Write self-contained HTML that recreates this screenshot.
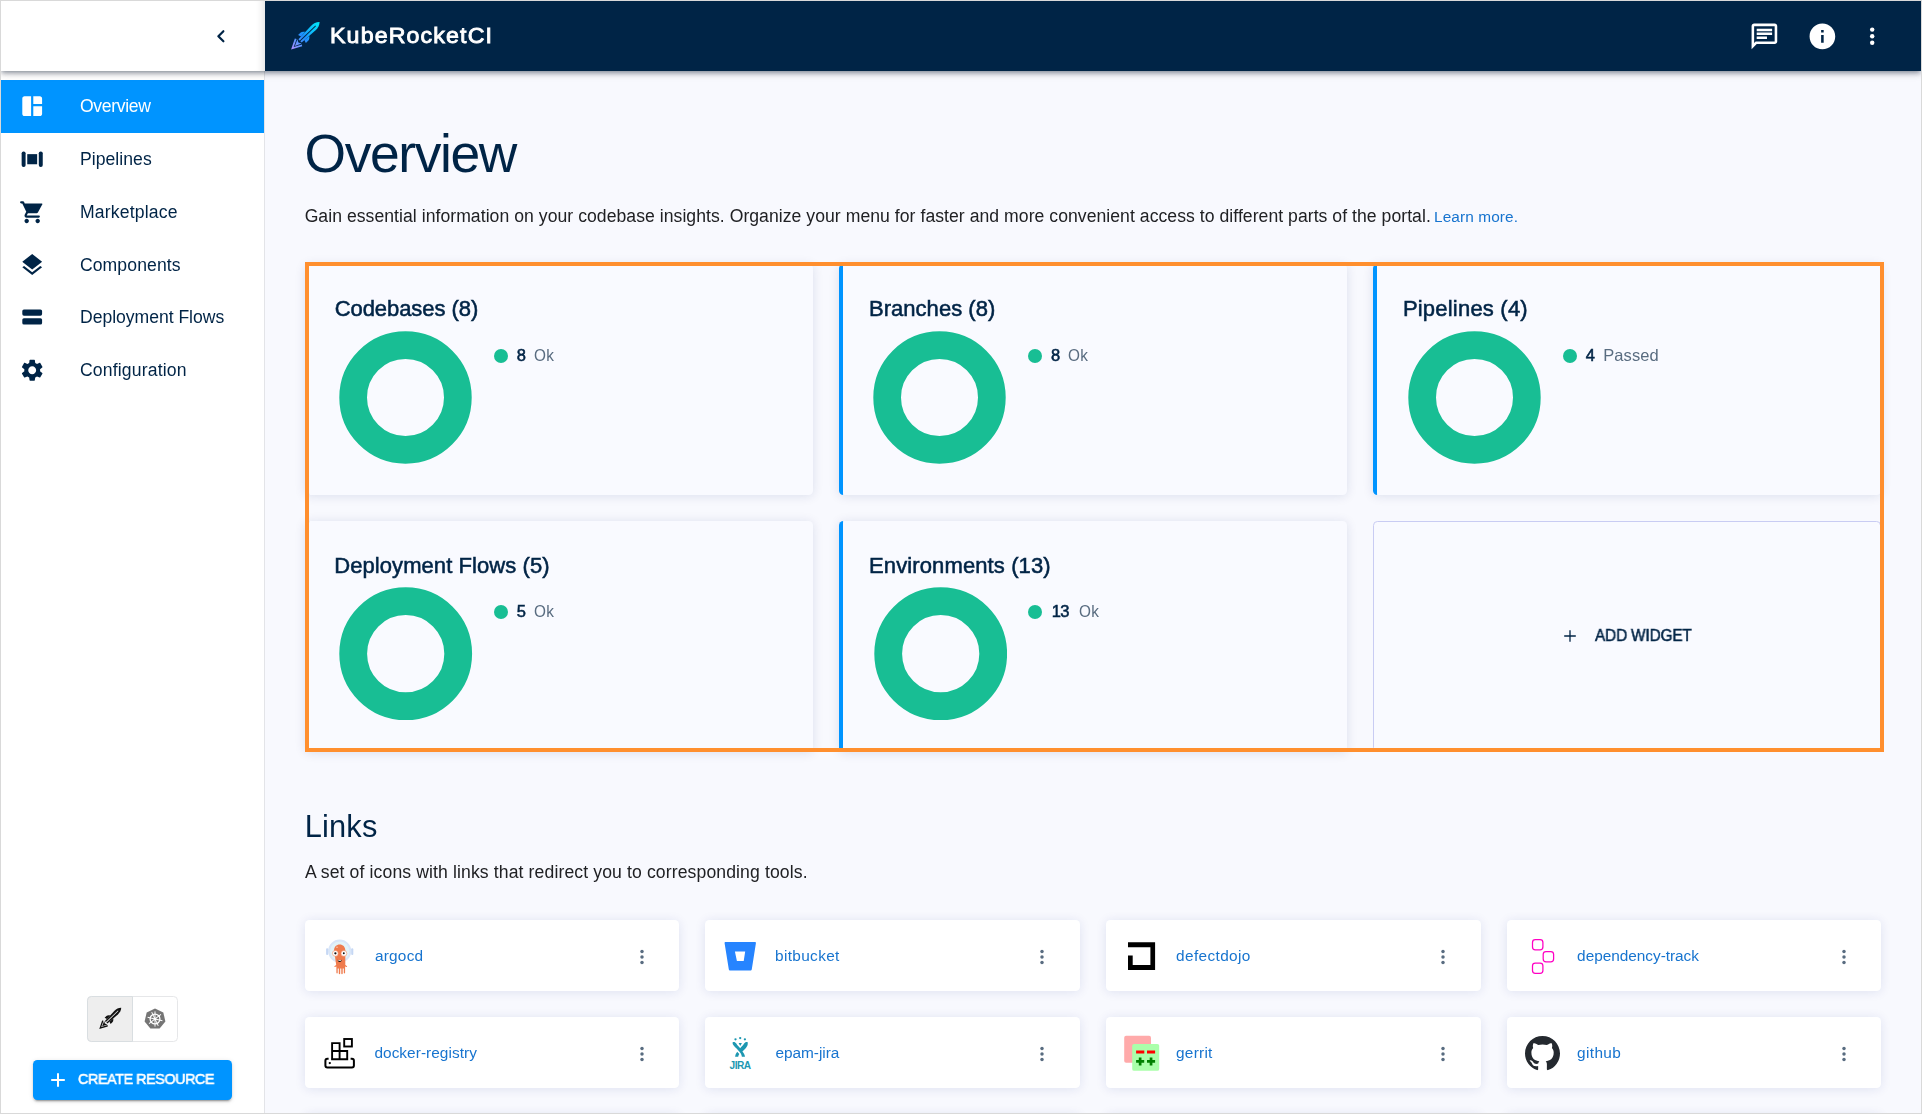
<!DOCTYPE html>
<html lang="en">
<head>
<meta charset="utf-8">
<title>KubeRocketCI - Overview</title>
<style>
*{box-sizing:border-box;margin:0;padding:0}
html,body{width:1922px;height:1114px;overflow:hidden;background:#f8f9fe}
body{position:relative;font-family:"Liberation Sans",Arial,sans-serif;color:#002446;-webkit-font-smoothing:antialiased}
.abs{position:absolute}
.t{position:absolute;white-space:nowrap;line-height:1}

/* frame */
#frame{position:absolute;left:0;top:0;width:1922px;height:1114px;border:1px solid #d9d9d9;z-index:50;pointer-events:none}
/* sidebar */
#side{position:absolute;left:1px;top:1px;width:264px;height:1112px;background:#fff;border-right:1px solid #e3e4e8;z-index:1}
#bar{position:absolute;left:1px;top:1px;width:1920px;height:70px;z-index:5;box-shadow:0 2.2px 4.4px -1.1px rgba(0,18,40,.34),0 4.4px 5.5px 0 rgba(0,18,40,.16),0 1.1px 11px 0 rgba(0,18,40,.13)}
#barL{position:absolute;left:0;top:0;width:264px;height:70px;background:#fff;box-shadow:inset -9px 0 8px -8px rgba(0,18,40,.16)}
#barR{position:absolute;left:264px;top:0;width:1656px;height:70px;background:#002446}
.nav{position:absolute;left:0;width:263px;height:52.8px}
.nav.sel{background:#0094ff;color:#fff}
.nav svg{position:absolute;left:17.8px;top:13.2px;width:26.4px;height:26.4px;fill:currentColor}
.nav .t{left:79.6px;top:17.4px;font-size:17.6px}
/* main */
.card{position:absolute;width:508px;height:231px;border-radius:4.4px;border-left:4.4px solid #0094ff;background:#f9faff;box-shadow:0 1px 11px 0 rgba(10,36,110,.12)}
.ctitle{font-size:22px}
.donut{position:absolute;width:133px;height:133px}
.leg{position:absolute;width:14px;height:14px;border-radius:50%;background:#18be94}
.lnum{font-size:15.4px}
.ltxt{font-size:15.4px;color:#596c80}
.link{position:absolute;width:374.6px;height:70.6px;border-radius:4.4px;background:#fff;box-shadow:0 1px 11px 0 rgba(20,40,140,.11)}
.link .t{left:70.4px;top:27.4px;font-size:15.4px;color:#1774cf}
.link svg.ic{position:absolute;left:19px;top:18.8px;width:33px;height:33px}
.link svg.dots{position:absolute;left:326px;top:26px;width:22px;height:22px;fill:#596c80}
</style>
</head>
<body>
<div id="side">
<div class="nav sel" style="top:78.8px"><svg viewBox="0 0 24 24"><path d="M11 21H5c-1.100 0-2-.900-2-2V5c0-1.100.900-2 2-2h6zm2 0h6c1.100 0 2-.900 2-2v-7h-8zm8-11V5c0-1.100-.900-2-2-2h-6v7z"/></svg></div>
<div class="nav" style="top:131.6px"><svg viewBox="0 0 24 24"><rect x="2.400" y="5" width="3.600" height="14" rx="1.700"/><rect x="7.500" y="7.400" width="9" height="9.200"/><rect x="18" y="5" width="3.600" height="14" rx="1.700"/></svg></div>
<div class="nav" style="top:184.4px"><svg viewBox="0 0 24 24"><path d="M7 18c-1.100 0-1.990.900-1.990 2S5.900 22 7 22s2-.900 2-2-.900-2-2-2zM1 3c0 .550.450 1 1 1h1l3.600 7.590-1.350 2.440C4.520 15.370 5.480 17 7 17h11c.550 0 1-.450 1-1s-.450-1-1-1H7l1.100-2h7.450c.750 0 1.410-.410 1.750-1.030l3.580-6.490A.996.996 0 0 0 21.010 4H5.210l-.670-1.430a.993.993 0 0 0-.900-.570H2c-.550 0-1 .450-1 1zm16 15c-1.100 0-1.990.900-1.990 2s.890 2 1.990 2 2-.900 2-2-.900-2-2-2z"/></svg></div>
<div class="nav" style="top:237.2px"><svg viewBox="0 0 24 24"><path transform="translate(0 .8)" d="M11.990 18.540l-7.370-5.730L3 14.070l9 7 9-7-1.630-1.270-7.380 5.740zM12 16l7.360-5.730L21 9l-9-7-9 7 1.630 1.270L12 16z"/></svg></div>
<div class="nav" style="top:290.0px"><svg viewBox="0 0 24 24"><rect x="3" y="4.900" width="18" height="5.700" rx="1.500"/><rect x="3" y="12.900" width="18" height="5.800" rx="1.500"/></svg></div>
<div class="nav" style="top:342.8px"><svg viewBox="0 0 24 24"><path d="M19.140 12.940c.040-.300.060-.610.060-.940 0-.320-.020-.640-.070-.940l2.030-1.580c.180-.140.230-.410.120-.610l-1.920-3.320c-.120-.220-.370-.290-.590-.220l-2.390.960c-.500-.380-1.030-.700-1.620-.940l-.360-2.540c-.040-.240-.240-.410-.480-.410h-3.840c-.240 0-.430.170-.470.410l-.360 2.540c-.590.240-1.130.570-1.620.940l-2.390-.960c-.220-.080-.470 0-.590.220L2.740 8.870c-.120.210-.080.470.120.610l2.030 1.580c-.050.300-.090.630-.090.940s.020.640.070.940l-2.030 1.580c-.180.140-.230.410-.120.610l1.920 3.320c.120.220.370.290.590.220l2.390-.960c.500.380 1.030.700 1.620.940l.360 2.540c.050.240.240.410.480.410h3.840c.240 0 .440-.170.470-.410l.360-2.540c.590-.240 1.130-.560 1.620-.940l2.390.960c.220.080.470 0 .590-.220l1.920-3.320c.120-.220.070-.470-.120-.610l-2.010-1.580zM12 15.600c-1.980 0-3.600-1.620-3.600-3.600s1.620-3.600 3.600-3.600 3.600 1.620 3.600 3.600-1.620 3.600-3.600 3.600z"/></svg></div>
<div class="abs" style="left:86px;top:995px;width:91px;height:46px;border:1px solid #e6e7e9;border-radius:4.4px;background:#fff"></div>
<div class="abs" style="left:86px;top:995px;width:46.400px;height:46px;border:1px solid #d9dee1;border-radius:4.4px 0 0 4.4px;background:#eeeeee"></div>
<svg class="abs" style="left:86px;top:995px;width:46px;height:46px" viewBox="87 996 46 46"><g transform="translate(121.200 1007.800) rotate(46) scale(.770)" fill="#111">
<path d="M0 0C2.300 2.200 3.300 5.400 3.200 9L2.300 27.200H-2.300L-3.200 9C-3.300 5.400-2.300 2.200 0 0Z"/>
<path d="M-2.900 17.200C-4.600 18.300-5.600 19.800-5.600 21.300V24.500L-2.400 23.500ZM2.900 17.200C4.600 18.300 5.600 19.800 5.600 21.300V24.500L2.400 23.500Z"/>
<path d="M0 34.400L-3 27.900 0 29.500 3 27.900Z"/>
<path d="M0 39.600L-5.300 29.300-3.800 28.300 0 36 3.800 28.300 5.300 29.300Z"/>
<path d="M-.5 5.500H.5V27.200H-.5Z" fill="#eee"/></g></svg>
<svg class="abs" style="left:141.600px;top:1006.200px;width:24px;height:24px" viewBox="-12 -12 24 24"><polygon fill="#757575" points="0,-10.600 8.300,-6.600 10.400,2.400 4.600,9.600 -4.600,9.600 -10.400,2.400 -8.300,-6.600"/><g stroke="#fff" fill="none"><circle r="4.900" stroke-width="1.250"/><g stroke-width=".950"><line y1="-7.600" y2="7.600"/><line y1="-7.600" y2="7.600" transform="rotate(51.400)"/><line y1="-7.600" y2="7.600" transform="rotate(102.800)"/><line y1="-7.600" y2="7.600" transform="rotate(154.300)"/></g></g><circle r="1.300" fill="#fff"/></svg>
<div class="abs" style="left:32px;top:1059px;width:199px;height:40px;border-radius:4.400px;background:#0094ff;box-shadow:0 3px 1px -2px rgba(0,0,0,.2),0 2px 2px 0 rgba(0,0,0,.14),0 1px 5px 0 rgba(0,0,0,.12)"></div>
<svg class="abs" style="left:49px;top:1071px;width:16px;height:16px" viewBox="0 0 16 16"><path d="M8 1.200V14.800M1.200 8H14.800" stroke="#fff" stroke-width="2" fill="none"/></svg>
</div>
<div id="bar"><div id="barL"></div><div id="barR"></div>
<svg class="abs" style="left:206.6px;top:21.8px;width:26.4px;height:26.4px" viewBox="0 0 24 24"><path fill="#002446" d="M14.71 6.71a.996.996 0 0 0-1.41 0L8.71 11.3a.996.996 0 0 0 0 1.41l4.59 4.59a.996.996 0 1 0 1.41-1.41L10.83 12l3.88-3.88c.39-.39.38-1.03 0-1.410z"/></svg>
<svg class="abs" style="left:279px;top:9px;width:60px;height:50px" viewBox="280 10 60 50">
<defs><linearGradient id="rg" gradientUnits="userSpaceOnUse" x1="0" y1="0" x2="0" y2="39.4"><stop offset="0" stop-color="#00eaf7"/><stop offset=".3" stop-color="#0cc0fb"/><stop offset=".55" stop-color="#1e8fff"/><stop offset=".75" stop-color="#5b94ff"/><stop offset="1" stop-color="#b58cff"/></linearGradient></defs>
<g transform="translate(319.6 22) rotate(46)">
<g fill="url(#rg)">
<path d="M0 0C2.3 2.2 3.3 5.4 3.2 9L2.3 27.2H-2.3L-3.2 9C-3.3 5.4-2.3 2.2 0 0Z"/>
<path d="M-2.900 17.200C-4.600 18.300-5.600 19.800-5.600 21.300V24.500L-2.400 23.500ZM2.900 17.200C4.600 18.300 5.600 19.800 5.600 21.300V24.500L2.400 23.500Z"/>
<path d="M0 34.400L-3 27.900 0 29.500 3 27.900Z"/>
<path d="M0 39.600L-5.300 29.300-3.800 28.300 0 36 3.800 28.300 5.300 29.300Z"/>
<path d="M-.45 5.500H.45V27.200H-.45Z" fill="#002446"/>
</g></g></svg>
<svg class="abs" style="left:1747.8px;top:19.8px;width:30.8px;height:30.8px" viewBox="0 0 24 24"><path fill="#fff" d="M4 4h16v12H5.170L4 17.170V4m0-2c-1.100 0-1.990.900-1.990 2L2 22l4-4h14c1.100 0 2-.900 2-2V4c0-1.100-.900-2-2-2H4zm2 10h8v2H6v-2zm0-3h12v2H6V9zm0-3h12v2H6V6z"/></svg>
<svg class="abs" style="left:1805.6px;top:19.6px;width:30.8px;height:30.8px" viewBox="0 0 24 24"><path fill="#fff" d="M12 2C6.480 2 2 6.480 2 12s4.480 10 10 10 10-4.480 10-10S17.520 2 12 2zm1 15h-2v-6h2v6zm0-8h-2V7h2v2z"/></svg>
<svg class="abs" style="left:1857.6px;top:22px;width:26.4px;height:26.4px" viewBox="0 0 24 24"><g fill="#fff"><circle cx="12" cy="6" r="2"/><circle cx="12" cy="12" r="2"/><circle cx="12" cy="18" r="2"/></g></svg>
</div>
<div id="main">
<div class="card" style="left:304.6px;top:264.2px"></div>
<svg class="donut" style="left:338.9px;top:330.8px" viewBox="-66.500 -66.500 133 133"><circle r="52.350" fill="none" stroke="#18be94" stroke-width="27.700"/></svg>
<div class="leg" style="left:493.9px;top:349.3px"></div>
<div class="card" style="left:838.8px;top:264.2px"></div>
<svg class="donut" style="left:873.1px;top:330.8px" viewBox="-66.500 -66.500 133 133"><circle r="52.350" fill="none" stroke="#18be94" stroke-width="27.700"/></svg>
<div class="leg" style="left:1028.1px;top:349.3px"></div>
<div class="card" style="left:1373px;top:264.2px"></div>
<svg class="donut" style="left:1408.2px;top:330.8px" viewBox="-66.500 -66.500 133 133"><circle r="52.350" fill="none" stroke="#18be94" stroke-width="27.700"/></svg>
<div class="leg" style="left:1562.8px;top:349.3px"></div>
<div class="card" style="left:304.6px;top:520.7px"></div>
<svg class="donut" style="left:339.4px;top:587.3px;width:133.4px;height:133.4px" viewBox="-66.500 -66.500 133 133"><circle r="52.350" fill="none" stroke="#18be94" stroke-width="27.700"/></svg>
<div class="leg" style="left:493.9px;top:605.2px"></div>
<div class="card" style="left:838.8px;top:520.7px"></div>
<svg class="donut" style="left:873.6px;top:587.3px;width:133.4px;height:133.4px" viewBox="-66.500 -66.500 133 133"><circle r="52.350" fill="none" stroke="#18be94" stroke-width="27.700"/></svg>
<div class="leg" style="left:1028.1px;top:605.2px"></div>
<div class="abs" style="left:1373px;top:520.700px;width:508px;height:231px;border:1px solid #c9ccf3;border-radius:4.400px;background:#f9faff"></div>
<svg class="abs" style="left:1561.500px;top:627.800px;width:16px;height:16px" viewBox="0 0 16 16"><path d="M8 2.200V13.800M2.200 8H13.800" stroke="#002446" stroke-width="1.300" fill="none"/></svg>
<div class="abs" style="left:305px;top:262px;width:1579px;height:490px;border:4px solid #ff8f2e;z-index:3"></div>
<div class="link" style="left:304.8px;top:920px"><svg class="abs" style="left:10px;top:10px;width:50px;height:50px" viewBox="314.800 930 50 50"><circle cx="339.500" cy="951.100" r="10.600" fill="#e2f3f8" stroke="#d9e6f8" stroke-width="2"/>
<rect x="325.900" y="948.300" width="2.100" height="6.600" rx=".9" fill="#c6d8f4"/><rect x="351" y="948.300" width="2.100" height="6.600" rx=".9" fill="#c6d8f4"/>
<path fill="#ef7b4d" d="M333.900 950.500c0-3.600 2.400-5.900 5.600-5.900s5.600 2.300 5.600 5.900v14.600l1.900 1.100-.4.900-1.700-.600v6.200c0 .9-1.300.9-1.300 0v-4.200h-1.100v5c0 .9-1.400.9-1.400 0v-5h-1.100v5c0 .9-1.400.9-1.400 0v-5h-1.100v4.200c0 .9-1.300.9-1.300 0v-6.200l-1.700.600-.4-.9 1.900-1.100z"/>
<circle cx="335.100" cy="953.400" r="2.900" fill="#fff" stroke="#ef7b4d" stroke-width=".5"/><circle cx="343.700" cy="953.400" r="2.900" fill="#fff" stroke="#ef7b4d" stroke-width=".5"/>
<circle cx="335.200" cy="953.300" r="1.150" fill="#111"/><circle cx="343.600" cy="953.300" r=".95" fill="#111"/>
<path d="M337.400 959.800q2.100 1 4.200 0q-.3 2.300-2.100 2.300t-2.100-2.300z" fill="#111"/><path d="M338 960.100q1.500.5 3 0l-.2.700q-1.300.4-2.600 0z" fill="#fff"/>
<circle cx="336.800" cy="947.300" r=".8" fill="#f9c4ad"/></svg><svg class="dots" viewBox="0 0 24 24"><circle cx="12" cy="6" r="1.900"/><circle cx="12" cy="12" r="1.900"/><circle cx="12" cy="18" r="1.900"/></svg></div>
<div class="link" style="left:705.3px;top:920px"><svg class="abs" style="left:10px;top:10px;width:50px;height:50px" viewBox="715.300 930 50 50"><path fill="#2684ff" fill-rule="evenodd" d="M725.800 942.100h29.400c.7 0 1.100.5 1 1.200l-4.100 26c-.1.800-.7 1.300-1.500 1.300h-20c-.8 0-1.400-.5-1.500-1.300l-4.200-26c-.1-.7.300-1.200.9-1.200zM735.200 951.500l2 9.500h6.800l1.500-9.500z"/></svg><svg class="dots" viewBox="0 0 24 24"><circle cx="12" cy="6" r="1.900"/><circle cx="12" cy="12" r="1.900"/><circle cx="12" cy="18" r="1.900"/></svg></div>
<div class="link" style="left:1106px;top:920px;width:375.2px"><svg class="abs" style="left:10px;top:10px;width:50px;height:50px" viewBox="1115.900 930 50 50"><path fill="#000" d="M1127.900 942.300h27.100v27.700h-27.100v-14.600h4.700v9.700h17.700v-17.800h-22.400z"/></svg><svg class="dots" viewBox="0 0 24 24"><circle cx="12" cy="6" r="1.900"/><circle cx="12" cy="12" r="1.900"/><circle cx="12" cy="18" r="1.900"/></svg></div>
<div class="link" style="left:1506.5px;top:920px"><svg class="abs" style="left:10px;top:10px;width:50px;height:50px" viewBox="1516.500 930 50 50"><g fill="none" stroke="#ff00c3" stroke-width="1.250"><rect x="1532" y="939.600" width="10.400" height="10.300" rx="2.800"/><rect x="1542.700" y="951.500" width="10.400" height="10.300" rx="2.800"/><rect x="1532" y="963" width="10.400" height="10.300" rx="2.800"/></g></svg><svg class="dots" viewBox="0 0 24 24"><circle cx="12" cy="6" r="1.900"/><circle cx="12" cy="12" r="1.900"/><circle cx="12" cy="18" r="1.900"/></svg></div>
<div class="link" style="left:304.8px;top:1017.2px"><svg class="abs" style="left:10px;top:10px;width:50px;height:50px" viewBox="314.800 1027.200 50 50"><g fill="none" stroke="#000" stroke-width="2"><path d="M328.400 1059H327.200a2 2 0 0 0-2 2v4.700a2 2 0 0 0 2 2h24.500a2 2 0 0 0 2-2V1061a2 2 0 0 0-2-2H350.400"/>
<path d="M331.900 1059.500V1043.300H339.400V1059.500M331.900 1051.200H347V1059.500M339.400 1051.200V1059.500M330.900 1059.500H348" stroke-width="1.900"/><rect x="344" y="1039.200" width="7.700" height="7.500" stroke-width="1.900"/></g><circle cx="329.600" cy="1063.300" r="1.150"/></svg><svg class="dots" viewBox="0 0 24 24"><circle cx="12" cy="6" r="1.900"/><circle cx="12" cy="12" r="1.900"/><circle cx="12" cy="18" r="1.900"/></svg></div>
<div class="link" style="left:705.3px;top:1017.2px"><svg class="abs" style="left:10px;top:10px;width:50px;height:50px" viewBox="715.300 1027.200 50 50"><g fill="#1d97b1"><path d="M733.100 1042.300c1.600-.5 2.600.2 3.500 1.500 1.300 2 2.500 3.300 3.900 4.600 1.400-1.300 2.600-2.600 3.900-4.600.9-1.300 1.900-2 3.500-1.500.6 2.400-.2 4.200-1.700 5.800-1.300 1.400-2.600 2.500-3.500 3.700 1.500 1.700 2.300 3.200 2.600 5.100h-3.100c-.4-2.400-1.500-4.200-3.100-5.800-1.100-1.100-2.700-2.600-4.300-4.300-1.500-1.600-2.300-2.900-1.700-4.500z"/>
<path d="M737.500 1051.900l2.100 2.300c-.6.900-.9 1.700-1.100 2.700h-3.100c.2-1.900.9-3.500 2.100-5z"/><path d="M738.900 1043.300h3.300l-1.650 2.900z"/>
<circle cx="735.800" cy="1039.500" r="1.150"/><circle cx="740.500" cy="1038.300" r="1.150"/><circle cx="745.200" cy="1039.500" r="1.150"/></g>
<text x="740.400" y="1069.600" text-anchor="middle" font-family="Liberation Sans, Arial, sans-serif" font-weight="bold" font-size="11.600" letter-spacing="-.600" fill="#1d97b1" textLength="21" lengthAdjust="spacingAndGlyphs">JIRA</text></svg><svg class="dots" viewBox="0 0 24 24"><circle cx="12" cy="6" r="1.900"/><circle cx="12" cy="12" r="1.900"/><circle cx="12" cy="18" r="1.900"/></svg></div>
<div class="link" style="left:1106px;top:1017.2px;width:375.2px"><svg class="abs" style="left:10px;top:10px;width:50px;height:50px" viewBox="1115.900 1027.200 50 50"><path fill="#ffaaaa" d="M1126 1036h23a1.900 1.900 0 0 1 1.900 1.900v23.100a1.900 1.900 0 0 1-1.900 1.900h-23a1.900 1.900 0 0 1-1.900-1.900v-23.100a1.900 1.900 0 0 1 1.900-1.900z"/>
<path fill="#aaffaa" d="M1134 1044.100h23.200a1.900 1.900 0 0 1 1.900 1.900v23.100a1.900 1.900 0 0 1-1.900 1.900H1134a1.900 1.900 0 0 1-1.900-1.900V1046a1.900 1.900 0 0 1 1.900-1.900z"/>
<path fill="#f00" d="M1136 1050.800h8.200v2.900h-8.200zM1146.900 1050.800h8.100v2.900h-8.100z"/>
<path fill="#008000" d="M1138.700 1057.600h2.700v2.700h2.700v2.700h-2.700v2.700h-2.700v-2.700h-2.700v-2.700h2.700zM1149.600 1057.600h2.700v2.700h2.700v2.700h-2.700v2.700h-2.700v-2.700h-2.700v-2.700h2.700z"/></svg><svg class="dots" viewBox="0 0 24 24"><circle cx="12" cy="6" r="1.900"/><circle cx="12" cy="12" r="1.900"/><circle cx="12" cy="18" r="1.900"/></svg></div>
<div class="link" style="left:1506.5px;top:1017.2px"><svg class="abs" style="left:18.600px;top:18.800px;width:35px;height:35px" viewBox="0 0 16 16"><path fill="#24292f" d="M8 0C3.580 0 0 3.580 0 8c0 3.540 2.290 6.530 5.470 7.590.4.070.550-.170.550-.380 0-.190-.010-.820-.010-1.490-2.010.370-2.530-.490-2.690-.940-.090-.230-.480-.940-.820-1.130-.280-.150-.680-.520-.010-.530.630-.010 1.080.580 1.230.820.720 1.210 1.870.870 2.330.660.070-.520.280-.870.510-1.070-1.780-.200-3.640-.890-3.640-3.950 0-.870.310-1.590.820-2.150-.080-.200-.360-1.020.080-2.120 0 0 .670-.210 2.200.820.640-.180 1.320-.270 2-.270.680 0 1.360.090 2 .270 1.530-1.040 2.200-.820 2.200-.820.440 1.100.160 1.920.080 2.120.510.560.820 1.270.820 2.150 0 3.070-1.870 3.750-3.650 3.950.290.250.540.730.540 1.480 0 1.070-.010 1.930-.010 2.200 0 .210.150.460.550.380A8.013 8.013 0 0016 8c0-4.420-3.580-8-8-8z"/></svg><svg class="dots" viewBox="0 0 24 24"><circle cx="12" cy="6" r="1.900"/><circle cx="12" cy="12" r="1.900"/><circle cx="12" cy="18" r="1.900"/></svg></div>
<div class="link" style="left:304.8px;top:1114.4px"></div>
<div class="link" style="left:705.3px;top:1114.4px"></div>
<div class="link" style="left:1106px;top:1114.4px;width:375.2px"></div>
<div class="link" style="left:1506.5px;top:1114.4px"></div>
</div>
<div id="texts" style="position:absolute;left:0;top:0;z-index:10;will-change:transform">
<span class="t" id="nav0" style="left:79.94px;top:98.01px;font-size:17.6px;letter-spacing:-0.331px;color:#fff">Overview</span>
<span class="t" id="nav1" style="left:79.96px;top:151.01px;font-size:17.6px;letter-spacing:0.047px">Pipelines</span>
<span class="t" id="nav2" style="left:79.96px;top:204.01px;font-size:17.6px;letter-spacing:0.166px">Marketplace</span>
<span class="t" id="nav3" style="left:79.88px;top:257.00px;font-size:17.6px;letter-spacing:0.110px">Components</span>
<span class="t" id="nav4" style="left:79.96px;top:309.01px;font-size:17.6px;letter-spacing:-0.029px">Deployment Flows</span>
<span class="t" id="nav5" style="left:79.88px;top:362.01px;font-size:17.6px;letter-spacing:0.170px">Configuration</span>
<span class="t" id="create" style="left:77.76px;top:1071.01px;font-size:15.4px;letter-spacing:-0.427px;color:#fff;-webkit-text-stroke:.55px currentColor;transform:scaleX(0.93);transform-origin:0 50%">CREATE RESOURCE</span>
<span class="t" id="logo" style="left:329.87px;top:25.01px;font-size:21.9px;letter-spacing:1.060px;color:#fff;-webkit-text-stroke:.85px #fff;transform:scaleX(1.06);transform-origin:0 50%">KubeRocketCI</span>
<span class="t" id="h1" style="left:304.60px;top:127.01px;font-size:53.4px;letter-spacing:-1.386px">Overview</span>
<span class="t" id="desc" style="left:304.63px;top:207.81px;font-size:17.6px;letter-spacing:0.047px;color:#202124">Gain essential information on your codebase insights. Organize your menu for faster and more convenient access to different parts of the portal.</span>
<span class="t" id="learn" style="left:1434.00px;top:208.81px;font-size:15.4px;letter-spacing:0.104px;color:#1774cf">Learn more.</span>
<span class="t" id="ct0" style="left:334.65px;top:298.01px;font-size:22px;letter-spacing:-0.061px;-webkit-text-stroke:.55px currentColor">Codebases (8)</span>
<span class="t" id="ln0" style="left:516.83px;top:347.01px;font-size:16.5px;letter-spacing:0.000px;-webkit-text-stroke:.55px currentColor">8</span>
<span class="t" id="lt0" style="left:534.22px;top:347.01px;font-size:16.5px;letter-spacing:0.233px;color:#596c80;transform:scaleX(0.93);transform-origin:0 50%">Ok</span>
<span class="t" id="ct1" style="left:869.04px;top:298.01px;font-size:22px;letter-spacing:0.023px;-webkit-text-stroke:.55px currentColor">Branches (8)</span>
<span class="t" id="ln1" style="left:1050.89px;top:347.01px;font-size:16.5px;letter-spacing:0.000px;-webkit-text-stroke:.55px currentColor">8</span>
<span class="t" id="lt1" style="left:1068.43px;top:347.01px;font-size:16.5px;letter-spacing:0.324px;color:#596c80;transform:scaleX(0.93);transform-origin:0 50%">Ok</span>
<span class="t" id="ct2" style="left:1402.89px;top:298.01px;font-size:22px;letter-spacing:0.210px;-webkit-text-stroke:.55px currentColor">Pipelines (4)</span>
<span class="t" id="ln2" style="left:1585.75px;top:347.01px;font-size:16.5px;letter-spacing:0.000px;-webkit-text-stroke:.55px currentColor">4</span>
<span class="t" id="lt2" style="left:1603.30px;top:347.01px;font-size:16.5px;letter-spacing:0.051px;color:#596c80">Passed</span>
<span class="t" id="ct3" style="left:334.25px;top:555.01px;font-size:22px;letter-spacing:0.070px;-webkit-text-stroke:.55px currentColor">Deployment Flows (5)</span>
<span class="t" id="ln3" style="left:516.80px;top:603.01px;font-size:16.5px;letter-spacing:0.000px;-webkit-text-stroke:.55px currentColor">5</span>
<span class="t" id="lt3" style="left:534.26px;top:603.01px;font-size:16.5px;letter-spacing:0.290px;color:#596c80;transform:scaleX(0.93);transform-origin:0 50%">Ok</span>
<span class="t" id="ct4" style="left:869.04px;top:555.01px;font-size:22px;letter-spacing:0.117px;-webkit-text-stroke:.55px currentColor">Environments (13)</span>
<span class="t" id="ln4" style="left:1051.83px;top:603.01px;font-size:16.5px;letter-spacing:-0.850px;-webkit-text-stroke:.55px currentColor">13</span>
<span class="t" id="lt4" style="left:1078.50px;top:603.01px;font-size:16.5px;letter-spacing:0.315px;color:#596c80;transform:scaleX(0.93);transform-origin:0 50%">Ok</span>
<span class="t" id="addw" style="left:1595.07px;top:627.01px;font-size:16.5px;letter-spacing:-0.144px;-webkit-text-stroke:.55px currentColor;transform:scaleX(0.93);transform-origin:0 50%">ADD WIDGET</span>
<span class="t" id="h2" style="left:304.72px;top:811.71px;font-size:30.8px;letter-spacing:0.173px">Links</span>
<span class="t" id="desc2" style="left:304.90px;top:864.31px;font-size:17.6px;letter-spacing:0.119px;color:#202124">A set of icons with links that redirect you to corresponding tools.</span>
<span class="t" id="lk0" style="left:374.94px;top:948.00px;font-size:15.4px;letter-spacing:0.225px;color:#1774cf">argocd</span>
<span class="t" id="lk1" style="left:775.02px;top:948.00px;font-size:15.4px;letter-spacing:0.341px;color:#1774cf">bitbucket</span>
<span class="t" id="lk2" style="left:1176.04px;top:948.00px;font-size:15.4px;letter-spacing:0.366px;color:#1774cf">defectdojo</span>
<span class="t" id="lk3" style="left:1577.12px;top:948.00px;font-size:15.4px;letter-spacing:-0.033px;color:#1774cf">dependency-track</span>
<span class="t" id="lk4" style="left:374.43px;top:1045.21px;font-size:15.4px;letter-spacing:0.046px;color:#1774cf">docker-registry</span>
<span class="t" id="lk5" style="left:775.44px;top:1045.21px;font-size:15.4px;letter-spacing:-0.032px;color:#1774cf">epam-jira</span>
<span class="t" id="lk6" style="left:1176.03px;top:1045.21px;font-size:15.4px;letter-spacing:0.253px;color:#1774cf">gerrit</span>
<span class="t" id="lk7" style="left:1577.12px;top:1045.21px;font-size:15.4px;letter-spacing:0.359px;color:#1774cf">github</span>
</div>
<div id="frame"></div>
</body>
</html>
